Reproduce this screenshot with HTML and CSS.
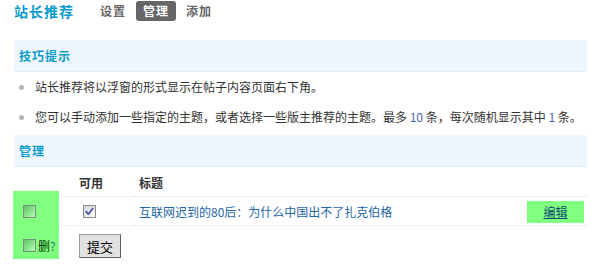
FILE: index.html
```html
<!DOCTYPE html>
<html lang="zh-CN">
<head>
<meta charset="utf-8">
<title>站长推荐</title>
<link rel="stylesheet" href="styles.css">
</head>
<body>
<div class="page">
  <div class="itemtitle">
    <h3 class="title">站长推荐</h3>
    <ul class="nav">
      <li><a class="nav-link" href="#">设置</a></li>
      <li><a class="nav-link current" href="#">管理</a></li>
      <li><a class="nav-link" href="#">添加</a></li>
    </ul>
  </div>

  <div class="partition">技巧提示</div>
  <ul class="tips">
    <li>站长推荐将以浮窗的形式显示在帖子内容页面右下角。</li>
    <li>您可以手动添加一些指定的主题，或者选择一些版主推荐的主题。最多 <em class="num">10</em> 条，每次随机显示其中 <em class="num">1</em> 条。</li>
  </ul>

  <div class="partition">管理</div>
  <div class="grid">
    <div class="th first r1"></div>
    <div class="th col2">可用</div>
    <div class="th col3">标题</div>
    <div class="th"></div>

    <div class="td first r2"></div>
    <div class="td col2"><span class="cb checked"><svg viewBox="0 0 11 11" width="11" height="11"><path d="M2.2 5.6 L4.4 8.2 L8.8 2.4" fill="none" stroke="#3f51a3" stroke-width="1.7" stroke-linecap="round" stroke-linejoin="round"/></svg></span></div>
    <div class="td col3"><a class="title-link" href="#">互联网迟到的80后：为什么中国出不了扎克伯格</a></div>
    <div class="td edit-cell"><a class="edit" href="#">编辑</a></div>

    <div class="tf first r3"></div>
    <div class="tf col2"><button class="btn" type="button">提交</button></div>
    <div class="tf"></div>
    <div class="tf"></div>

    <div class="green">
      <span class="cb green-cb"></span>
      <div class="del-row"><span class="cb green-cb"></span><span class="del">删</span><span class="q">?</span></div>
    </div>
  </div>
</div>
</body>
</html>
```

FILE: styles.css
```css
html, body {
  margin: 0;
  padding: 0;
  background: #fff;
}
body {
  font-family: "Noto Sans CJK SC", "Liberation Sans", sans-serif;
  font-size: 12px;
  color: #333;
}
.page {
  width: 573px;
  padding-left: 14px;
}
.itemtitle {
  display: flex;
  align-items: center;
  height: 22px;
}
.title {
  margin: 0;
  font-size: 14px;
  font-weight: bold;
  color: #0a9ccc;
  letter-spacing: 1px;
  line-height: 22px;
}
.nav {
  display: flex;
  list-style: none;
  margin: 0 0 0 19px;
  padding: 0;
  gap: 3px;
}
.nav-link {
  display: block;
  padding: 0 7px;
  height: 20px;
  line-height: 20px;
  font-size: 12px;
  font-weight: bold;
  letter-spacing: 1px;
  color: #666;
  text-decoration: none;
  border-radius: 3px;
}
.nav-link.current {
  background: #666;
  color: #fff;
}
.partition {
  height: 31px;
  line-height: 31px;
  padding-left: 5px;
  background: #f0f6fd;
  border-bottom: 1px dotted #d4e8f7;
  color: #0a9ccc;
  font-weight: bold;
  letter-spacing: 1px;
}
.itemtitle + .partition {
  margin-top: 18px;
}
.tips {
  list-style: none;
  margin: 0 0 3px;
  padding: 0;
}
.tips li {
  position: relative;
  height: 30px;
  line-height: 30px;
  padding-left: 21px;
  white-space: nowrap;
}
.tips li::before {
  content: "";
  position: absolute;
  left: 5px;
  top: 13px;
  width: 5px;
  height: 5px;
  border-radius: 50%;
  background: #b4b4b4;
}
.num {
  font-style: normal;
  color: #4a64a8;
}
.grid {
  display: grid;
  grid-template-columns: 60px 60px 1fr 67px;
}
.first {
  grid-column: 1;
}
.r1 { grid-row: 1; }
.r2 { grid-row: 2; }
.r3 { grid-row: 3; }
.th {
  height: 26px;
  padding-top: 3px;
  line-height: 26px;
  font-weight: bold;
  border-bottom: 1px dotted #d4e8f7;
}
.td {
  height: 28px;
  display: flex;
  align-items: center;
  border-bottom: 1px dotted #d4e8f7;
  white-space: nowrap;
}
.tf {
  height: 28px;
  padding-top: 8px;
}
.col2,
.col3 {
  padding-left: 5px;
}
.cb {
  display: inline-flex;
  align-items: center;
  justify-content: center;
  box-sizing: border-box;
  width: 13px;
  height: 13px;
  border: 1px solid #8c8c8c;
  background: linear-gradient(135deg, #d6d6d6, #ffffff);
}
.cb.checked {
  margin-left: 4px;
}
.title-link {
  color: #2366a8;
  text-decoration: none;
}
.edit-cell {
  padding-left: 7px;
}
.edit {
  display: block;
  width: 57px;
  height: 22px;
  line-height: 22px;
  text-align: center;
  background: #80ff80;
  color: #0e4a70;
  text-decoration: underline;
  margin-top: 2px;
}
.btn {
  display: block;
  box-sizing: border-box;
  width: 42px;
  height: 24px;
  padding: 0;
  font-family: "Noto Sans CJK SC", "Liberation Sans", sans-serif;
  font-size: 13px;
  color: #000;
  background: #e1e1e1;
  border: 1px solid;
  border-color: #9a9a9a #5e5e5e #5e5e5e #9a9a9a;
}
.green {
  grid-column: 1;
  grid-row: 2 / 4;
  align-self: start;
  z-index: 1;
  margin: -6px 0 0 -1px;
  width: 46px;
  height: 68px;
  box-sizing: border-box;
  padding: 14px 0 0 10px;
  background: #80ff80;
  display: flex;
  flex-direction: column;
  align-items: flex-start;
}
.green-cb {
  border-color: #7c8c7c;
  background: linear-gradient(135deg, #5fc45f, #b4ffb4);
}
.del-row {
  display: flex;
  align-items: center;
  margin-top: 21px;
}
.del {
  margin-left: 2px;
  color: #063806;
  line-height: 13px;
}
.q {
  color: #2f7a6a;
  line-height: 13px;
}
```
